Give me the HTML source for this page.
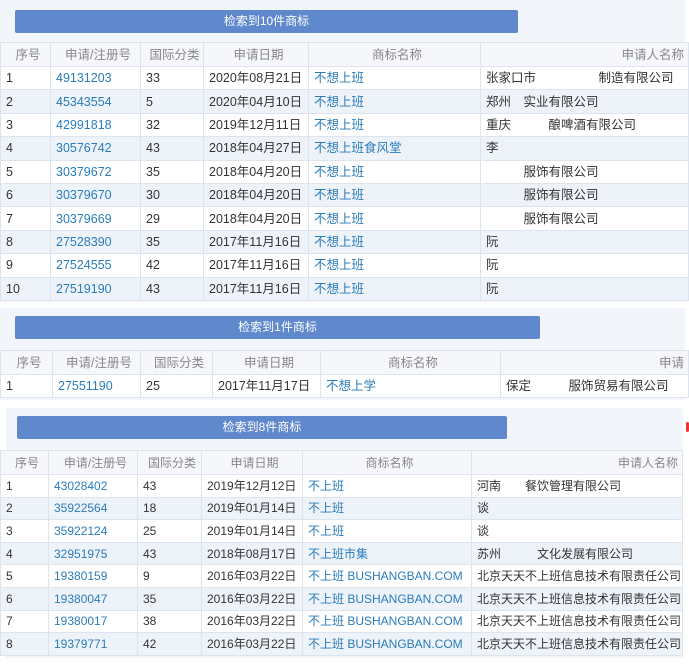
<!DOCTYPE html>
<html><head><meta charset="utf-8"><style>
body{margin:0;width:689px;height:664px;overflow:hidden;background:#fff;font-family:"Liberation Sans","Noto Sans CJK SC",sans-serif;font-size:12.5px;color:#333}
.sec{position:absolute;left:6px;right:4px;background:#f2f6fb}
.btn{position:absolute;height:23px;background:#6088cc;color:#fff;text-align:center;line-height:23px;border-radius:2px;font-size:12px}
table{position:absolute;left:0;border-collapse:collapse;table-layout:fixed;background:#fff}
td,th{height:22.4px;padding:0 0 0 5px;border:1px solid #dde4ee;white-space:nowrap;overflow:hidden;text-align:left;font-weight:normal;line-height:20px}
th{height:23px;color:#888;text-align:center;background:#f5f7fb}
th:last-child{text-align:right;padding-right:4px}
tr:nth-child(odd) td{background:#eef3fa}
a{color:#2a7cbb;text-decoration:none}
.b{color:transparent}
.s3 td{height:21.6px}
.s3 table{font-size:12px}
</style></head><body>

<div class="sec" style="top:0;height:302px;left:0">
<div class="btn" style="left:15px;top:10px;width:503px">检索到10件商标</div>
<table style="top:42px;width:689px">
<colgroup><col style="width:50px"><col style="width:90px"><col style="width:63px"><col style="width:105px"><col style="width:172px"><col></colgroup>
<tr><th>序号</th><th>申请/注册号</th><th>国际分类</th><th>申请日期</th><th>商标名称</th><th>申请人名称</th></tr>
<tr><td>1</td><td><a>49131203</a></td><td>33</td><td>2020年08月21日</td><td><a>不想上班</a></td><td>张家口市<span class="b">某某某某某</span>制造有限公司</td></tr>
<tr><td>2</td><td><a>45343554</a></td><td>5</td><td>2020年04月10日</td><td><a>不想上班</a></td><td>郑州<span class="b">某</span>实业有限公司</td></tr>
<tr><td>3</td><td><a>42991818</a></td><td>32</td><td>2019年12月11日</td><td><a>不想上班</a></td><td>重庆<span class="b">某某某</span>酿啤酒有限公司</td></tr>
<tr><td>4</td><td><a>30576742</a></td><td>43</td><td>2018年04月27日</td><td><a>不想上班食风堂</a></td><td>李</td></tr>
<tr><td>5</td><td><a>30379672</a></td><td>35</td><td>2018年04月20日</td><td><a>不想上班</a></td><td><span class="b">某某某</span>服饰有限公司</td></tr>
<tr><td>6</td><td><a>30379670</a></td><td>30</td><td>2018年04月20日</td><td><a>不想上班</a></td><td><span class="b">某某某</span>服饰有限公司</td></tr>
<tr><td>7</td><td><a>30379669</a></td><td>29</td><td>2018年04月20日</td><td><a>不想上班</a></td><td><span class="b">某某某</span>服饰有限公司</td></tr>
<tr><td>8</td><td><a>27528390</a></td><td>35</td><td>2017年11月16日</td><td><a>不想上班</a></td><td>阮</td></tr>
<tr><td>9</td><td><a>27524555</a></td><td>42</td><td>2017年11月16日</td><td><a>不想上班</a></td><td>阮</td></tr>
<tr><td>10</td><td><a>27519190</a></td><td>43</td><td>2017年11月16日</td><td><a>不想上班</a></td><td>阮</td></tr>
</table></div>

<div class="sec" style="top:308px;height:92px;left:0">
<div class="btn" style="left:15px;top:8px;width:525px">检索到1件商标</div>
<table style="top:42px;width:689px">
<colgroup><col style="width:52px"><col style="width:88px"><col style="width:72px"><col style="width:108px"><col style="width:180px"><col></colgroup>
<tr><th>序号</th><th>申请/注册号</th><th>国际分类</th><th>申请日期</th><th>商标名称</th><th>申请</th></tr>
<tr><td>1</td><td><a>27551190</a></td><td>25</td><td>2017年11月17日</td><td><a>不想上学</a></td><td>保定<span class="b">某某某</span>服饰贸易有限公司</td></tr>
</table></div>

<div class="sec s3" style="top:408px;height:250px;left:6px;right:6px">
<div class="btn" style="left:11px;top:8px;width:490px">检索到8件商标</div>
<div style="position:absolute;right:-6px;top:14px;width:3px;height:10px;background:#e33;border-radius:2px"></div>
<table style="top:42px;left:-6px;width:683px">
<colgroup><col style="width:48px"><col style="width:89px"><col style="width:64px"><col style="width:101px"><col style="width:169px"><col></colgroup>
<tr><th>序号</th><th>申请/注册号</th><th>国际分类</th><th>申请日期</th><th>商标名称</th><th>申请人名称</th></tr>
<tr><td>1</td><td><a>43028402</a></td><td>43</td><td>2019年12月12日</td><td><a>不上班</a></td><td>河南<span class="b">某某</span>餐饮管理有限公司</td></tr>
<tr><td>2</td><td><a>35922564</a></td><td>18</td><td>2019年01月14日</td><td><a>不上班</a></td><td>谈</td></tr>
<tr><td>3</td><td><a>35922124</a></td><td>25</td><td>2019年01月14日</td><td><a>不上班</a></td><td>谈</td></tr>
<tr><td>4</td><td><a>32951975</a></td><td>43</td><td>2018年08月17日</td><td><a>不上班市集</a></td><td>苏州<span class="b">某某某</span>文化发展有限公司</td></tr>
<tr><td>5</td><td><a>19380159</a></td><td>9</td><td>2016年03月22日</td><td><a>不上班 BUSHANGBAN.COM</a></td><td>北京天天不上班信息技术有限责任公司</td></tr>
<tr><td>6</td><td><a>19380047</a></td><td>35</td><td>2016年03月22日</td><td><a>不上班 BUSHANGBAN.COM</a></td><td>北京天天不上班信息技术有限责任公司</td></tr>
<tr><td>7</td><td><a>19380017</a></td><td>38</td><td>2016年03月22日</td><td><a>不上班 BUSHANGBAN.COM</a></td><td>北京天天不上班信息技术有限责任公司</td></tr>
<tr><td>8</td><td><a>19379771</a></td><td>42</td><td>2016年03月22日</td><td><a>不上班 BUSHANGBAN.COM</a></td><td>北京天天不上班信息技术有限责任公司</td></tr>
</table></div>
</body></html>
